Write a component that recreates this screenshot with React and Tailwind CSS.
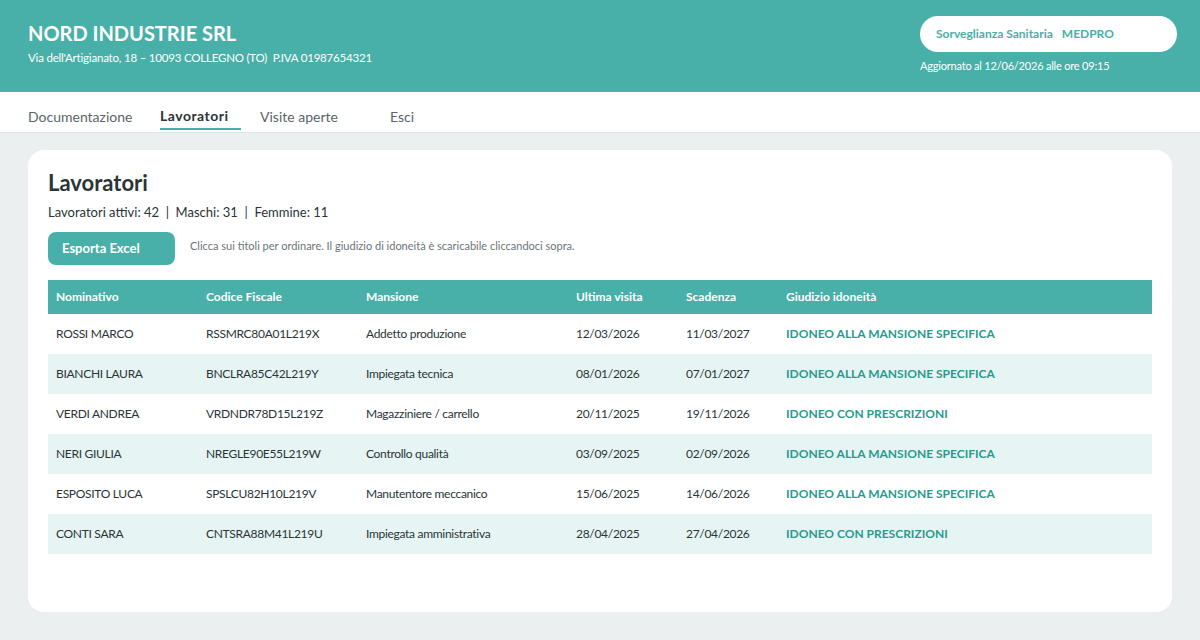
import React from "react";

const rows = [
  ["ROSSI MARCO", "RSSMRC80A01L219X", "Addetto produzione", "12/03/2026", "11/03/2027", "IDONEO ALLA MANSIONE SPECIFICA"],
  ["BIANCHI LAURA", "BNCLRA85C42L219Y", "Impiegata tecnica", "08/01/2026", "07/01/2027", "IDONEO ALLA MANSIONE SPECIFICA"],
  ["VERDI ANDREA", "VRDNDR78D15L219Z", "Magazziniere / carrello", "20/11/2025", "19/11/2026", "IDONEO CON PRESCRIZIONI"],
  ["NERI GIULIA", "NREGLE90E55L219W", "Controllo qualità", "03/09/2025", "02/09/2026", "IDONEO ALLA MANSIONE SPECIFICA"],
  ["ESPOSITO LUCA", "SPSLCU82H10L219V", "Manutentore meccanico", "15/06/2025", "14/06/2026", "IDONEO ALLA MANSIONE SPECIFICA"],
  ["CONTI SARA", "CNTSRA88M41L219U", "Impiegata amministrativa", "28/04/2025", "27/04/2026", "IDONEO CON PRESCRIZIONI"],
];

const cols = ["Nominativo", "Codice Fiscale", "Mansione", "Ultima visita", "Scadenza", "Giudizio idoneità"];
const widths = ["w-[150px]", "w-[160px]", "w-[210px]", "w-[110px]", "w-[100px]", ""];

export default function App() {
  return (
    <div className="min-h-[640px] bg-[#eceff0] font-['Lato',sans-serif] text-[#2b3437]">
      {/* Header */}
      <header className="h-[92px] bg-[#48b0a8] px-7 flex justify-between">
        <div className="pt-[20px]">
          <h1 className="text-[20px] font-bold text-white leading-[26px]">NORD INDUSTRIE SRL</h1>
          <p className="text-[11.5px] text-white mt-[3px] tracking-[-0.2px]">
            Via dell'Artigianato, 18 – 10093 COLLEGNO (TO)&nbsp;&nbsp;P.IVA 01987654321
          </p>
        </div>
        <div className="pt-4 w-[257px] mr-[-5px]">
          <div className="h-9 rounded-full bg-white flex items-center px-4 text-[12px] font-bold text-[#48b0a8]">
            Sorveglianza Sanitaria<span className="ml-[9px]">MEDPRO</span>
          </div>
          <p className="text-[11px] text-white mt-[6px] tracking-[-0.2px]">Aggiornato al 12/06/2026 alle ore 09:15</p>
        </div>
      </header>

      {/* Nav */}
      <nav className="h-[41px] bg-white border-b border-[#dfe3e4] px-7 flex items-end text-[14px] text-[#5b6468]">
        <span className="w-[132px] pb-[5px]">Documentazione</span>
        <span className="w-[81px] pb-[2px] mb-[2px] font-bold text-[#2b3437] border-b-2 border-[#48b0a8] tracking-[0.5px]">Lavoratori</span>
        <span className="ml-[19px] w-[130px] pb-[5px]">Visite aperte</span>
        <span className="pb-[5px]">Esci</span>
      </nav>

      {/* Card */}
      <div className="px-7 pt-[17px] pb-7">
        <div className="bg-white rounded-[16px] h-[462px] px-5 pt-[20px]">
          <h2 className="text-[22px] font-bold leading-[26px]">Lavoratori</h2>
          <p className="text-[13px] mt-[7px]">Lavoratori attivi: 42&nbsp;&nbsp;|&nbsp;&nbsp;Maschi: 31&nbsp;&nbsp;|&nbsp;&nbsp;Femmine: 11</p>
          <div className="flex items-center mt-[9px]">
            <button className="w-[127px] h-[33px] rounded-[8px] bg-[#48b0a8] text-white text-[13px] font-bold text-left pl-[14px] pt-[2px]">
              Esporta Excel
            </button>
            <span className="ml-[15px] text-[11px] text-[#6b7478] -mt-[4px]">
              Clicca sui titoli per ordinare. Il giudizio di idoneità è scaricabile cliccandoci sopra.
            </span>
          </div>

          <table className="w-full mt-[15px] border-collapse text-[12px]">
            <thead>
              <tr className="bg-[#48b0a8] h-[34px] text-white text-left">
                {cols.map((c, i) => (
                  <th key={c} className={`${widths[i]} pl-2 font-bold`}>{c}</th>
                ))}
              </tr>
            </thead>
            <tbody>
              {rows.map((r, ri) => (
                <tr key={r[0]} className={`h-[40px] ${ri % 2 === 1 ? "bg-[#e6f4f3]" : "bg-white"}`}>
                  {r.map((cell, ci) => (
                    <td
                      key={ci}
                      className={`pl-2 ${ci === 5 ? "font-bold text-[#2a9a8f]" : "text-[#2b3437] tracking-[-0.3px]"}`}
                    >
                      {cell}
                    </td>
                  ))}
                </tr>
              ))}
            </tbody>
          </table>
        </div>
      </div>
    </div>
  );
}
